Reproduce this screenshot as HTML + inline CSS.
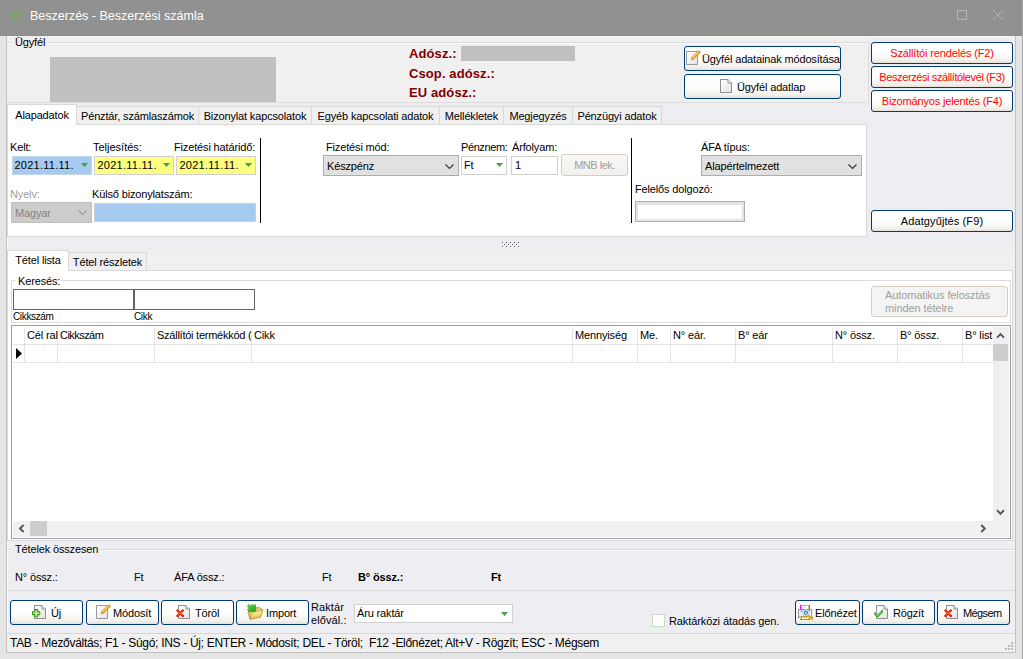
<!DOCTYPE html>
<html lang="hu">
<head>
<meta charset="utf-8">
<title>Beszerzés - Beszerzési számla</title>
<style>
*{box-sizing:border-box;margin:0;padding:0}
html,body{width:1023px;height:659px;overflow:hidden}
body{background:#e5e5e5;font-family:"Liberation Sans",sans-serif;font-size:11px;color:#000;position:relative}
.a{position:absolute}
.t{position:absolute;white-space:nowrap;letter-spacing:-0.15px;line-height:13px;height:13px}
#titlebar{left:0;top:0;width:1022px;height:36px;background:#919191;border-bottom:1px solid #8c8c8c}
#title{left:30px;top:8px;font-size:12.5px;letter-spacing:0;line-height:16px;height:16px;color:#fff}
#client{left:6px;top:36px;width:1010px;height:617px;background:#eeeef2;border:1px solid #c2c2c2;border-top:none;box-shadow:inset 1px 1px 0 #fafafa}
.btn{position:absolute;border:1px solid #003c74;border-radius:3px;background:linear-gradient(#ffffff 0%,#fdfdfc 55%,#f3f1ec 85%,#e6e2da 100%);white-space:nowrap;line-height:13px}
.btn .t{top:4px}
.red{color:#ff0000;text-align:center}
.dis{position:absolute;border:1px solid #d3cdc3;border-radius:3px;background:#f4f4f4;color:#a0a0a0;white-space:nowrap}
.tab{letter-spacing:-0.15px;position:absolute;border:1px solid #d9d9d9;background:#f0f0f0;height:19px;top:106px;line-height:13px;padding:3px 0 0 0;text-align:center;white-space:nowrap}
.tab.act{background:#fff;top:104px;height:21px;border-bottom:none;z-index:2;padding-top:4px}
.page{position:absolute;background:#fff;border:1px solid #d9d9d9}
.combo{position:absolute;border:1px solid #adadad;background:#e1e1e1;height:21px}
.edit{position:absolute;border:1px solid #d0d0d0;background:#fff;height:19px}
.gl{position:absolute;background:#dcdcdc}
.arr{position:absolute;right:3px;top:6px;width:7px;height:4px;background:#45a045;clip-path:polygon(0 0,100% 0,50% 100%)}
.col{position:absolute;top:0;height:36px;border-left:1px solid #e4e4e4}
</style>
</head>
<body>
<svg width="0" height="0" style="position:absolute"><defs>
<linearGradient id="pg" x1="0" y1="0" x2="1" y2="1"><stop offset="0" stop-color="#ffffff"/><stop offset="1" stop-color="#e4e4e6"/></linearGradient>
<linearGradient id="pen" x1="0" y1="0" x2="1" y2="1"><stop offset="0" stop-color="#ffe27a"/><stop offset="1" stop-color="#e8921a"/></linearGradient>
<linearGradient id="grn" x1="0" y1="0" x2="1" y2="1"><stop offset="0" stop-color="#63d84a"/><stop offset="1" stop-color="#1f9a1c"/></linearGradient>
<linearGradient id="fold" x1="0" y1="0" x2="0" y2="1"><stop offset="0" stop-color="#fff6a8"/><stop offset="1" stop-color="#e6c04a"/></linearGradient>
<symbol id="i-page" viewBox="0 0 12 14"><path d="M0.5 0.5H8L11.5 4V13.5H0.5Z" fill="url(#pg)" stroke="#8f8c92"/><path d="M8 0.5V4H11.5" fill="#f4f4f4" stroke="#8f8c92"/></symbol>
<symbol id="i-edit" viewBox="0 0 16 15"><path d="M0.5 1.5H11.5V14.5H0.5Z" fill="url(#pg)" stroke="#9a98a2"/><path d="M13 2L6.6 8.4" stroke="#d98a14" stroke-width="3" stroke-linecap="round"/><path d="M12.8 1.8L6.6 8" stroke="#ffd95e" stroke-width="1.2" stroke-linecap="round"/><path d="M4.9 10.4L5.3 8.2L7 9.8Z" fill="#c9a66b"/></symbol>
<symbol id="i-x" viewBox="0 0 9 9"><path d="M1.6 1.6L7.4 7.4M7.4 1.6L1.6 7.4" stroke="#d91a0a" stroke-width="2.6" stroke-linecap="round"/><path d="M2.4 2.4L6.6 6.6M6.6 2.4L2.4 6.6" stroke="#ff5a1e" stroke-width="1.1" stroke-linecap="round"/></symbol>
<symbol id="i-plus" viewBox="0 0 9 9"><path d="M3 0.6H6V3H8.4V6H6V8.4H3V6H0.6V3H3Z" fill="#c4f29a" stroke="#3f9c12" stroke-width="1.2" stroke-linejoin="round"/></symbol>
<symbol id="i-chk" viewBox="0 0 10 8"><path d="M1.2 3.8L4 6.4L8.8 1.4" fill="none" stroke="#2f9a18" stroke-width="2.6" stroke-linecap="round" stroke-linejoin="round"/><path d="M1.6 3.9L4 6.1L8.4 1.7" fill="none" stroke="#c9f5a6" stroke-width="0.9" stroke-linecap="round" stroke-linejoin="round"/></symbol>
<symbol id="i-imp" viewBox="0 0 16 16"><path d="M1 8L4 5.6L8.5 3.9L12.6 3.6L15.7 5.8L13.4 13.1L3 15.3Z" fill="#ecd27a" stroke="#a8843a" stroke-width="0.8" stroke-linejoin="round"/><path d="M4.1 8.2L15.8 6L13.3 13L3.1 15.2Z" fill="url(#fold)" stroke="#b8923c" stroke-width="0.7" stroke-linejoin="round"/><path d="M1.6 0.4L3.8 1.8L5.6 0.2L6.6 1.4L8.4 0.3L8.9 5.2L8.6 7.6L5 7.8L1.4 7.4L0.5 5.2L2 4.4L0.3 2.4Z" fill="url(#grn)" stroke="#2c9a20" stroke-width="0.5" stroke-linejoin="round"/></symbol>
<symbol id="i-prev" viewBox="0 0 16 16"><rect x="3.4" y="0.4" width="7.4" height="4.6" fill="#fdfdfd" stroke="#a3a3a3" stroke-width="0.8"/><rect x="4.8" y="2.2" width="3.6" height="1" fill="#dcdcdc"/><rect x="2" y="0" width="1" height="4" fill="#ff00ff"/><rect x="11" y="0" width="1" height="4" fill="#ff00ff"/><rect x="0.5" y="4.5" width="13.2" height="7.5" fill="#f1f1f2" stroke="#8c8c8c" stroke-width="0.9"/><path d="M2.2 5.2L4.6 5.2L3 7.4Z" fill="#5fb0e8"/><path d="M10.4 5.2L12.4 5.2L11.8 7Z" fill="#5fb0e8"/><rect x="3.5" y="11.4" width="7.6" height="3.2" fill="#fff3c0" stroke="#b0920c" stroke-width="0.9"/><rect x="5.4" y="12.2" width="3.6" height="0.8" fill="#f0c060"/><path d="M10.8 10.8L14.2 14.2" stroke="#f0a000" stroke-width="1.9" stroke-linecap="round"/><circle cx="7.9" cy="7.7" r="3.3" fill="#ffffff" stroke="#a0a0a0" stroke-width="0.7"/><circle cx="7.9" cy="7.7" r="1.6" fill="#d6f6ff" stroke="#1e7ad6" stroke-width="1.1"/><rect x="0" y="12" width="1" height="1" fill="#ff00ff"/><rect x="2" y="14" width="1" height="1" fill="#ff00ff"/><rect x="11" y="14" width="1" height="1" fill="#ff00ff"/><rect x="14" y="12" width="1" height="1" fill="#ff00ff"/></symbol>
</defs></svg>
<div id="titlebar" class="a"></div>
<svg class="a" style="left:10px;top:9px" width="14" height="14" viewBox="0 0 14 14"><g fill="none" stroke="#70ad47" stroke-width="1.2" stroke-linecap="round"><path d="M3.2 3.2Q7.2 6.6 11.4 3.2"/><path d="M1 5.3Q5.6 6.4 5.6 12.4"/><path d="M13.2 5.3Q8.6 6.4 8.6 12.4"/></g><g fill="#70ad47"><circle cx="5.7" cy="1.4" r="0.75"/><circle cx="8.7" cy="1.4" r="0.75"/><circle cx="1.1" cy="8.6" r="0.75"/><circle cx="2.6" cy="11.1" r="0.75"/><circle cx="13.1" cy="8.7" r="0.75"/><circle cx="11.6" cy="11.2" r="0.75"/></g></svg>
<div id="title" class="t">Beszerzés - Beszerzési számla</div>
<svg class="a" style="left:956px;top:9px" width="12" height="12"><rect x="1.5" y="1.5" width="9" height="9" fill="none" stroke="#b5b5b5" stroke-width="1"/></svg>
<svg class="a" style="left:992px;top:9px" width="12" height="12"><path d="M1 1L11 11M11 1L1 11" stroke="#b5b5b5" stroke-width="1" fill="none"/></svg>

<div id="client" class="a"></div>
<div class="a" style="left:1022px;top:0;width:1px;height:659px;background:#a4a4a4"></div>

<!-- Ügyfél groupbox -->
<div class="a" style="left:7px;top:37px;width:862px;height:66px;background:#f0f0f0"></div>
<div class="a" style="left:7px;top:42px;width:862px;height:61px;border:1px solid #dcdcdc;border-left:none;box-shadow:inset 0 1px 0 #fbfbfb"></div>
<div id="ugyfel" class="t" style="left:12px;top:36px;padding:0 3px;background:#f0f0f0">Ügyfél</div>
<div class="a" style="left:50px;top:57px;width:226px;height:45px;background:#c0c0c0"></div>
<div id="adosz" class="t" style="left:409px;top:46px;font-weight:bold;color:#800000;font-size:13px;letter-spacing:0.1px;line-height:15px;height:15px">Adósz.:</div>
<div class="a" style="left:461px;top:46px;width:114px;height:15px;background:#c0c0c0"></div>
<div id="csop" class="t" style="left:409px;top:66px;font-weight:bold;color:#800000;font-size:13px;letter-spacing:0.1px;line-height:15px;height:15px">Csop. adósz.:</div>
<div id="eu" class="t" style="left:409px;top:85px;font-weight:bold;color:#800000;font-size:13px;letter-spacing:0.1px;line-height:15px;height:15px">EU adósz.:</div>

<div id="b_mod" class="btn" style="left:684px;top:46px;width:157px;height:25px"><svg class="a" style="left:1px;top:3px" width="16" height="15"><use href="#i-edit"/></svg><span id="b_mod_t" class="t" style="left:17px;top:6px">Ügyfél adatainak módosítása</span></div>
<div id="b_lap" class="btn" style="left:684px;top:74px;width:157px;height:25px"><svg class="a" style="left:35px;top:4px" width="12" height="14"><use href="#i-page"/></svg><span id="b_lap_t" class="t" style="left:52px;top:6px">Ügyfél adatlap</span></div>

<div id="r1" class="btn red" style="left:871px;top:42px;width:142px;height:22px"><span class="t" style="left:0;right:0;top:4px">Szállítói rendelés (F2)</span></div>
<div id="r2" class="btn red" style="left:871px;top:66px;width:142px;height:22px"><span class="t" style="left:0;right:0;top:4px;letter-spacing:-0.4px">Beszerzési szállítólevél (F3)</span></div>
<div id="r3" class="btn red" style="left:871px;top:90px;width:142px;height:22px"><span class="t" style="left:0;right:0;top:4px">Bizományos jelentés (F4)</span></div>
<div id="r4" class="btn" style="left:871px;top:210px;width:142px;height:22px;text-align:center"><span class="t" style="left:0;right:0;top:4px;letter-spacing:0.1px">Adatgyűjtés (F9)</span></div>

<!-- Tab control 1 -->
<div class="page" style="left:7px;top:124px;width:860px;height:113px"></div>
<div id="tab1" class="tab act" style="left:7px;width:70px">Alapadatok</div>
<div id="tab2" class="tab" style="left:76px;width:123px">Pénztár, számlaszámok</div>
<div id="tab3" class="tab" style="left:198px;width:114px">Bizonylat kapcsolatok</div>
<div id="tab4" class="tab" style="left:311px;width:129px">Egyéb kapcsolati adatok</div>
<div id="tab5" class="tab" style="left:439px;width:65px">Mellékletek</div>
<div id="tab6" class="tab" style="left:503px;width:70px">Megjegyzés</div>
<div id="tab7" class="tab" style="left:572px;width:90px">Pénzügyi adatok</div>

<div id="l_kelt" class="t" style="left:10px;top:141px">Kelt:</div>
<div id="l_telj" class="t" style="left:93px;top:141px;letter-spacing:0">Teljesítés:</div>
<div id="l_fiz" class="t" style="left:174px;top:141px">Fizetési határidő:</div>
<div id="d1" class="edit" style="left:12px;top:156px;width:80px;background:#a6caf0;border-color:#c4d6ea"><span class="t" style="left:1.5px;top:2px;letter-spacing:0.25px">2021.11.11.</span><i class="arr"></i></div>
<div id="d2" class="edit" style="left:94px;top:156px;width:80px;background:#ffff80"><span class="t" style="left:2.5px;top:2px;letter-spacing:0.25px">2021.11.11.</span><i class="arr"></i></div>
<div id="d3" class="edit" style="left:176px;top:156px;width:80px;background:#ffff80"><span class="t" style="left:2.5px;top:2px;letter-spacing:0.25px">2021.11.11.</span><i class="arr"></i></div>
<div class="a" style="left:260px;top:138px;width:1px;height:85px;background:#000"></div>
<div id="l_nyelv" class="t" style="left:10px;top:188px;color:#a0a0a0">Nyelv:</div>
<div id="l_kulso" class="t" style="left:92px;top:188px">Külső bizonylatszám:</div>
<div id="c_nyelv" class="combo" style="left:11px;top:202px;width:81px;background:#cccccc;border-color:#bfbfbf;color:#838383"><span class="t" style="left:3px;top:4px">Magyar</span><svg class="a" style="right:4px;top:7px" width="9" height="6"><path d="M0.5 0.5L4.5 4.5L8.5 0.5" fill="none" stroke="#9c9c9c" stroke-width="1.1"/></svg></div>
<div id="e_kulso" class="edit" style="left:94px;top:203px;width:162px;background:#a6caf0"></div>

<div id="l_fmod" class="t" style="left:326px;top:141px">Fizetési mód:</div>
<div id="c_fmod" class="combo" style="left:323px;top:155px;width:136px"><span class="t" style="left:3px;top:4px">Készpénz</span><svg class="a" style="right:4px;top:8px" width="9" height="6"><path d="M0.5 0.5L4.5 4.5L8.5 0.5" fill="none" stroke="#333" stroke-width="1.1"/></svg></div>
<div id="l_penz" class="t" style="left:461px;top:141px;letter-spacing:-0.4px">Pénznem:</div>
<div id="c_penz" class="edit" style="left:461px;top:156px;width:46px"><span class="t" style="left:2px;top:2px">Ft</span><i class="arr"></i></div>
<div id="l_arf" class="t" style="left:512px;top:141px">Árfolyam:</div>
<div id="e_arf" class="edit" style="left:511px;top:156px;width:47px"><span class="t" style="left:3px;top:2px">1</span></div>
<div id="b_mnb" class="dis" style="left:561px;top:154px;width:67px;height:22px;text-align:center;line-height:20px;letter-spacing:-0.5px;background:linear-gradient(#f8f8f7,#f2f1ee)">MNB lek.</div>
<div class="a" style="left:631px;top:138px;width:1px;height:85px;background:#000"></div>
<div id="l_afa" class="t" style="left:701px;top:141px">ÁFA típus:</div>
<div id="c_afa" class="combo" style="left:701px;top:155px;width:161px"><span class="t" style="left:3px;top:4px">Alapértelmezett</span><svg class="a" style="right:4px;top:8px" width="9" height="6"><path d="M0.5 0.5L4.5 4.5L8.5 0.5" fill="none" stroke="#333" stroke-width="1.1"/></svg></div>
<div id="l_fel" class="t" style="left:635px;top:183px">Felelős dolgozó:</div>
<div id="e_fel" class="a" style="left:635px;top:201px;width:110px;height:21px;border:1px solid #adadad;background:#e4e4e4"><div class="a" style="left:2px;top:3px;right:2px;bottom:2px;background:#fff"></div></div>

<!-- splitter -->
<div class="a" style="left:7px;top:250px;width:1008px;height:21px;background:#f0f0f0"></div>
<svg class="a" style="left:501px;top:241px" width="20" height="8"><g fill="#fbfbfd"><rect x="2" y="2" width="1" height="1"/><rect x="6" y="2" width="1" height="1"/><rect x="10" y="2" width="1" height="1"/><rect x="14" y="2" width="1" height="1"/><rect x="18" y="2" width="1" height="1"/><rect x="4" y="4" width="1" height="1"/><rect x="8" y="4" width="1" height="1"/><rect x="12" y="4" width="1" height="1"/><rect x="16" y="4" width="1" height="1"/><rect x="2" y="6" width="1" height="1"/><rect x="6" y="6" width="1" height="1"/><rect x="10" y="6" width="1" height="1"/><rect x="14" y="6" width="1" height="1"/><rect x="18" y="6" width="1" height="1"/></g><g fill="#5a5a5e"><rect x="1" y="1" width="1" height="1"/><rect x="5" y="1" width="1" height="1"/><rect x="9" y="1" width="1" height="1"/><rect x="13" y="1" width="1" height="1"/><rect x="17" y="1" width="1" height="1"/><rect x="3" y="3" width="1" height="1"/><rect x="7" y="3" width="1" height="1"/><rect x="11" y="3" width="1" height="1"/><rect x="15" y="3" width="1" height="1"/><rect x="1" y="5" width="1" height="1"/><rect x="5" y="5" width="1" height="1"/><rect x="9" y="5" width="1" height="1"/><rect x="13" y="5" width="1" height="1"/><rect x="17" y="5" width="1" height="1"/></g></svg>

<!-- Tab control 2 -->
<div class="page" style="left:7px;top:270px;width:1006px;height:271px"></div>
<div id="tb1" class="tab act" style="left:7px;top:250px;width:62px;height:21px;padding-top:3px">Tétel lista</div>
<div id="tb2" class="tab" style="left:68px;top:252px;width:79px;height:19px">Tétel részletek</div>

<div class="a" style="left:11px;top:280px;width:1000px;height:43px;border:1px solid #dcdcdc"></div>
<div id="l_ker" class="t" style="left:15px;top:275px;padding:0 1px 0 3px;background:#fff">Keresés:</div>
<div id="s1" class="a" style="left:13px;top:289px;width:121px;height:21px;border:1px solid #646464;background:#fff"></div>
<div id="s2" class="a" style="left:134px;top:289px;width:121px;height:21px;border:1px solid #646464;background:#fff"></div>
<div id="l_s1" class="t" style="left:13px;top:310px;font-size:10px;letter-spacing:-0.35px">Cikkszám</div>
<div id="l_s2" class="t" style="left:134px;top:310px;font-size:10px;letter-spacing:-0.35px">Cikk</div>
<div id="b_auto" class="dis" style="left:871px;top:286px;width:137px;height:31px;line-height:13px;padding:2px 0 0 13px;font-size:11px;letter-spacing:-0.1px">Automatikus felosztás<br>minden tételre</div>

<!-- grid -->
<div id="grid" class="a" style="left:11px;top:325px;width:1000px;height:214px;border:1px solid #9c9ca6;background:#fff;overflow:hidden">
 <div class="a" style="left:0;top:18px;width:982px;height:1px;background:#e4e4e4"></div>
 <div class="a" style="left:0;top:36px;width:982px;height:1px;background:#e4e4e4"></div>
 <div class="col" style="left:12px"></div>
 <div class="col" style="left:45px"><span class="t" style="left:2px;top:3px;letter-spacing:-0.55px">Cikkszám</span></div>
 <div class="col" style="left:142px"><span class="t" style="left:2px;top:3px;width:94px;overflow:hidden;letter-spacing:-0.25px">Szállítói termékkód (</span></div>
 <div class="col" style="left:239px"><span class="t" style="left:2px;top:3px">Cikk</span></div>
 <div class="col" style="left:560px"><span class="t" style="left:2px;top:3px">Mennyiség</span></div>
 <div class="col" style="left:625px"><span class="t" style="left:2px;top:3px">Me.</span></div>
 <div class="col" style="left:658px"><span class="t" style="left:2px;top:3px">N° eár.</span></div>
 <div class="col" style="left:723px"><span class="t" style="left:2px;top:3px">B° eár</span></div>
 <div class="col" style="left:820px"><span class="t" style="left:2px;top:3px">N° össz.</span></div>
 <div class="col" style="left:885px"><span class="t" style="left:2px;top:3px">B° össz.</span></div>
 <div class="col" style="left:950px"><span class="t" style="left:2px;top:3px">B° list</span></div>
 <span class="t" style="left:15px;top:3px">Cél ral</span>
 <svg class="a" style="left:4px;top:22px" width="6" height="11"><path d="M0 0L6 5.5L0 11Z" fill="#000"/></svg>
 <!-- v scrollbar -->
 <div class="a" style="left:981px;top:1px;width:16px;height:194px;background:#f0f0f0"></div>
 <div class="a" style="left:981px;top:18px;width:15px;height:17px;background:#cdcdcd"></div>
 <svg class="a" style="left:984px;top:6px" width="9" height="7"><path d="M1 5.6L4.5 2L8 5.6" fill="none" stroke="#555" stroke-width="1.9"/></svg>
 <svg class="a" style="left:984px;top:183px" width="9" height="7"><path d="M1 1.2L4.5 4.8L8 1.2" fill="none" stroke="#555" stroke-width="1.9"/></svg>
 <!-- h scrollbar -->
 <div class="a" style="left:1px;top:195px;width:996px;height:16px;background:#f0f0f0"></div>
 <div class="a" style="left:18px;top:195px;width:17px;height:15px;background:#cdcdcd"></div>
 <svg class="a" style="left:6px;top:198px" width="7" height="9"><path d="M5.6 1L2 4.5L5.6 8" fill="none" stroke="#555" stroke-width="1.9"/></svg>
 <svg class="a" style="left:968px;top:198px" width="7" height="9"><path d="M1.2 1L4.8 4.5L1.2 8" fill="none" stroke="#555" stroke-width="1.9"/></svg>
 <div class="a" style="left:0;top:0;width:998px;height:212px;border:1px solid #fff"></div>
</div>

<!-- Tételek összesen -->
<div class="a" style="left:7px;top:549px;width:1008px;height:42px;border-top:1px solid #dcdcdc;border-bottom:1px solid #dcdcdc;box-shadow:inset 0 1px 0 #f8f8fa"></div>
<div id="l_tet" class="t" style="left:12px;top:543px;padding:0 3px;background:#eeeef2">Tételek összesen</div>
<div id="l_n" class="t" style="left:15px;top:571px">N° össz.:</div>
<div id="l_ft1" class="t" style="left:134px;top:571px">Ft</div>
<div id="l_afao" class="t" style="left:174px;top:571px">ÁFA össz.:</div>
<div id="l_ft2" class="t" style="left:322px;top:571px">Ft</div>
<div id="l_b" class="t" style="left:358px;top:571px;font-weight:bold">B° össz.:</div>
<div id="l_ft3" class="t" style="left:491px;top:571px;font-weight:bold">Ft</div>

<!-- bottom buttons -->
<div id="bb1" class="btn" style="left:10px;top:600px;width:73px;height:25px"><svg class="a" style="left:23px;top:4px" width="12" height="14"><use href="#i-page"/></svg><svg class="a" style="left:21px;top:8px" width="8.5" height="8.5"><use href="#i-plus"/></svg><span id="t_uj" class="t" style="left:40px;top:6px">Új</span></div>
<div id="bb2" class="btn" style="left:86px;top:600px;width:73px;height:25px"><svg class="a" style="left:9px;top:3px" width="16" height="15"><use href="#i-edit"/></svg><span id="t_mod" class="t" style="left:26px;top:6px">Módosít</span></div>
<div id="bb3" class="btn" style="left:161px;top:600px;width:73px;height:25px"><svg class="a" style="left:16px;top:4px" width="12" height="14"><use href="#i-page"/></svg><svg class="a" style="left:14px;top:8px" width="8.3" height="8.3"><use href="#i-x"/></svg><span id="t_tor" class="t" style="left:33px;top:6px">Töröl</span></div>
<div id="bb4" class="btn" style="left:236px;top:600px;width:73px;height:25px"><svg class="a" style="left:10px;top:3px" width="16" height="16"><use href="#i-imp"/></svg><span id="t_imp" class="t" style="left:29px;top:6px">Import</span></div>
<div id="l_rak" class="t" style="left:311px;top:600.5px;height:26px;letter-spacing:0.1px">Raktár<br>elővál.:</div>
<div id="c_rak" class="edit" style="left:354px;top:604px;width:159px;height:19px"><span class="t" style="left:2px;top:2px">Áru raktár</span><i class="arr" style="top:7px;right:4px"></i></div>
<div id="chk" class="a" style="left:652px;top:614px;width:13px;height:13px;border:1px solid #c4dcc4;background:#fff"></div>
<div id="l_chk" class="t" style="left:669px;top:615px;letter-spacing:-0.1px">Raktárközi átadás gen.</div>
<div id="bb5" class="btn" style="left:795px;top:600px;width:65px;height:25px"><svg class="a" style="left:2px;top:4px" width="16" height="16"><use href="#i-prev"/></svg><span id="t_elo" class="t" style="left:19px;top:6px">Előnézet</span></div>
<div id="bb6" class="btn" style="left:862px;top:600px;width:73px;height:25px"><svg class="a" style="left:13px;top:4px" width="12" height="14"><use href="#i-page"/></svg><svg class="a" style="left:11px;top:9px" width="9.4" height="7.5"><use href="#i-chk"/></svg><span id="t_rog" class="t" style="left:30px;top:6px">Rögzít</span></div>
<div id="bb7" class="btn" style="left:937px;top:600px;width:73px;height:25px"><svg class="a" style="left:8px;top:4px" width="12" height="14"><use href="#i-page"/></svg><svg class="a" style="left:6px;top:8px" width="8.3" height="8.3"><use href="#i-x"/></svg><span id="t_meg" class="t" style="left:25px;top:6px;letter-spacing:-0.6px">Mégsem</span></div>

<!-- status bar -->
<div class="a" style="left:7px;top:633px;width:1008px;height:19px;background:#f0f0f0;border-top:1px solid #d7d7d7"></div>
<svg class="a" style="left:1004px;top:641px" width="10" height="10"><g fill="#b9b9b9"><rect x="7" y="1" width="2" height="2"/><rect x="4" y="4" width="2" height="2"/><rect x="7" y="4" width="2" height="2"/><rect x="1" y="7" width="2" height="2"/><rect x="4" y="7" width="2" height="2"/><rect x="7" y="7" width="2" height="2"/></g></svg>
<div id="status" class="t" style="left:10px;top:636px;font-size:12px;letter-spacing:-0.3px;line-height:15px;height:15px">TAB - Mezőváltás; F1 - Súgó; INS - Új; ENTER - Módosít; DEL - Töröl;&nbsp; F12 -Előnézet; Alt+V - Rögzít; ESC - Mégsem</div>
</body>
</html>
